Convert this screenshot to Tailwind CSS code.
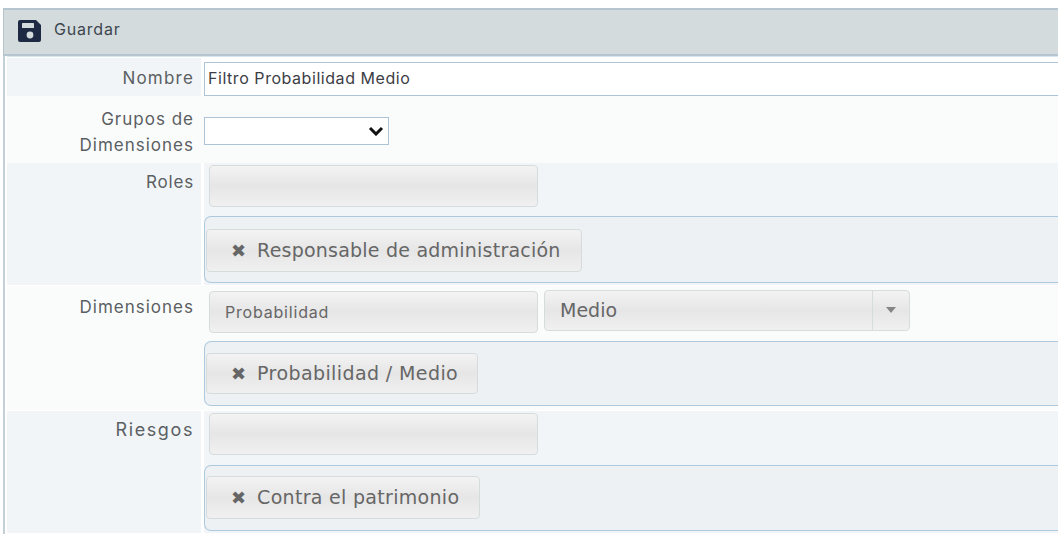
<!DOCTYPE html>
<html lang="es">
<head>
<meta charset="utf-8">
<script src="https://cdn.jsdelivr.net/npm/@tailwindcss/browser@4"></script>
</head>
<body class="bg-white w-[1059px] h-[537px] overflow-hidden font-['Inter','Liberation_Sans',sans-serif]">
<div class="pt-[8px] pl-[3px] pr-[1px]">
  <div class="h-[48px] bg-[#d3dbdc] border-y-2 border-[#b5c6d0] border-l border-l-[#b5c6d0] flex items-center pl-[14px] gap-[12px] pb-[3px]">
    <svg width="24" height="24" viewBox="0 0 24 24"><path fill="#1e2a44" d="M2 1h16l5 5v15a2 2 0 0 1-2 2H2a2 2 0 0 1-2-2V3a2 2 0 0 1 2-2z"/><rect x="4" y="4" width="12" height="5" rx="0.5" fill="#d3dbdc"/><circle cx="12" cy="16" r="3.4" fill="#d3dbdc"/></svg>
    <span class="text-[16px] text-[#3d4650] -mt-[4px] tracking-[0.8px]">Guardar</span>
  </div>
  <div class="border-l-2 border-[#c3d0d8] h-[478px] pl-[2px] flex flex-col">
    <div class="flex h-[40px] pt-[1px] border-t border-[#dbe6ec]">
      <div class="w-[194px] bg-[#f1f5f7] text-right pr-[7px] pt-[10px] text-[17px] tracking-[1.2px] leading-[20px] text-[#5b5f63]">Nombre</div>
      <div class="pl-[3px] flex-1 pt-[4px]">
        <div class="h-[34px] w-full bg-white border border-[#adc4d6] border-r-0 pl-[3px] text-[16px] tracking-[0.55px] leading-[30px] text-[#3d3d45]">Filtro Probabilidad Medio</div>
      </div>
    </div>
    <div class="flex h-[67px] bg-[#fafbfb]">
      <div class="w-[194px] text-right pr-[7px] pt-[10px] text-[17px] tracking-[1px] leading-[26px] text-[#5b5f63]">Grupos de<br>Dimensiones</div>
      <div class="pl-[3px] pt-[21px]">
        <div class="w-[185px] h-[28px] bg-white border border-[#adc4d6] flex items-center justify-end pr-[4px]">
          <svg width="16" height="10" viewBox="0 0 16 10"><path d="M2 2l6 6 6-6" fill="none" stroke="#111" stroke-width="3"/></svg>
        </div>
      </div>
    </div>
    <div class="flex h-[122px] bg-[#f1f5f7] mb-[1px]">
      <div class="w-[194px] text-right pr-[7px] pt-[9px] text-[17px] tracking-[0.8px] leading-[20px] text-[#5b5f63] bg-[#f1f5f7]">Roles</div>
      <div class="pl-[3px] flex-1 bg-white">
        <div class="bg-[#f1f5f7] h-full">
          <div class="pl-[5px] pt-[2px]">
            <div class="w-[329px] h-[42px] rounded-[4px] border border-[#d6dcdc] bg-linear-to-b from-[#f3f3f3] via-[#e6e6e6] to-[#f0f0f0]"></div>
          </div>
          <div class="mt-[9px] h-[67px] border border-[#adc9de] border-r-0 rounded-l-[7px] bg-[#edf1f4] pt-[12px] pl-[1px]">
            <div class="inline-flex items-center h-[43px] w-[376px] rounded-[4px] border border-[#d6dcdc] bg-linear-to-b from-[#f3f3f3] via-[#e6e6e6] to-[#f0f0f0] pl-[24px] gap-[11px] font-['DejaVu_Sans',sans-serif] text-[19px] text-[#666]"><span class="text-[18px] leading-none font-bold">✖</span><span class="tracking-[0.22px]">Responsable de administración</span></div>
          </div>
        </div>
      </div>
    </div>
    <div class="flex h-[124px] bg-[#fafcfc] mb-[1px]">
      <div class="w-[194px] text-right pr-[7px] pt-[11px] text-[17px] tracking-[1px] leading-[20px] text-[#5b5f63]">Dimensiones</div>
      <div class="pl-[3px] flex-1">
        <div class="flex pl-[5px] pt-[5px] gap-[6px] items-start">
          <div class="w-[329px] h-[42px] rounded-[4px] border border-[#d6dcdc] bg-linear-to-b from-[#f3f3f3] via-[#e6e6e6] to-[#f0f0f0] pl-[15px] flex items-center text-[16px] tracking-[0.8px] text-[#666]">Probabilidad</div>
          <div class="w-[366px] h-[41px] -mt-[1px] rounded-[4px] border border-[#d6dcdc] bg-linear-to-b from-[#f3f3f3] via-[#e6e6e6] to-[#f0f0f0] flex items-center font-['DejaVu_Sans',sans-serif] text-[19px] text-[#666]">
            <span class="flex-1 pl-[15px]">Medio</span>
            <span class="w-[37px] h-full border-l border-[#d6dcdc] flex items-center justify-center">
              <svg width="12" height="7" viewBox="0 0 12 7"><path d="M1 0h10L6 6z" fill="#858585"/></svg>
            </span>
          </div>
        </div>
        <div class="mt-[8px] h-[65px] border border-[#adc9de] border-r-0 rounded-l-[7px] bg-[#edf1f4] pt-[11px] pl-[1px]">
          <div class="inline-flex items-center h-[41px] w-[272px] rounded-[4px] border border-[#d6dcdc] bg-linear-to-b from-[#f3f3f3] via-[#e6e6e6] to-[#f0f0f0] pl-[24px] gap-[11px] font-['DejaVu_Sans',sans-serif] text-[19px] text-[#666]"><span class="text-[18px] leading-none font-bold">✖</span><span class="tracking-[0.4px]">Probabilidad / Medio</span></div>
        </div>
      </div>
    </div>
    <div class="flex h-[122px] bg-[#f1f5f7]">
      <div class="w-[194px] text-right pr-[7px] pt-[9px] text-[18px] tracking-[1.6px] leading-[20px] text-[#5b5f63]">Riesgos</div>
      <div class="pl-[3px] flex-1 bg-white">
        <div class="bg-[#f1f5f7] h-full">
          <div class="pl-[5px] pt-[2px]">
            <div class="w-[329px] h-[42px] rounded-[4px] border border-[#d6dcdc] bg-linear-to-b from-[#f3f3f3] via-[#e6e6e6] to-[#f0f0f0]"></div>
          </div>
          <div class="mt-[10px] h-[66px] border border-[#adc9de] border-r-0 rounded-l-[7px] bg-[#edf1f4] pt-[10px] pl-[1px]">
            <div class="inline-flex items-center h-[43px] w-[274px] rounded-[4px] border border-[#d6dcdc] bg-linear-to-b from-[#f3f3f3] via-[#e6e6e6] to-[#f0f0f0] pl-[24px] gap-[11px] font-['DejaVu_Sans',sans-serif] text-[19px] text-[#666]"><span class="text-[18px] leading-none font-bold">✖</span><span class="tracking-[0.3px]">Contra el patrimonio</span></div>
          </div>
        </div>
      </div>
    </div>
  </div>
</div>
</body>
</html>
